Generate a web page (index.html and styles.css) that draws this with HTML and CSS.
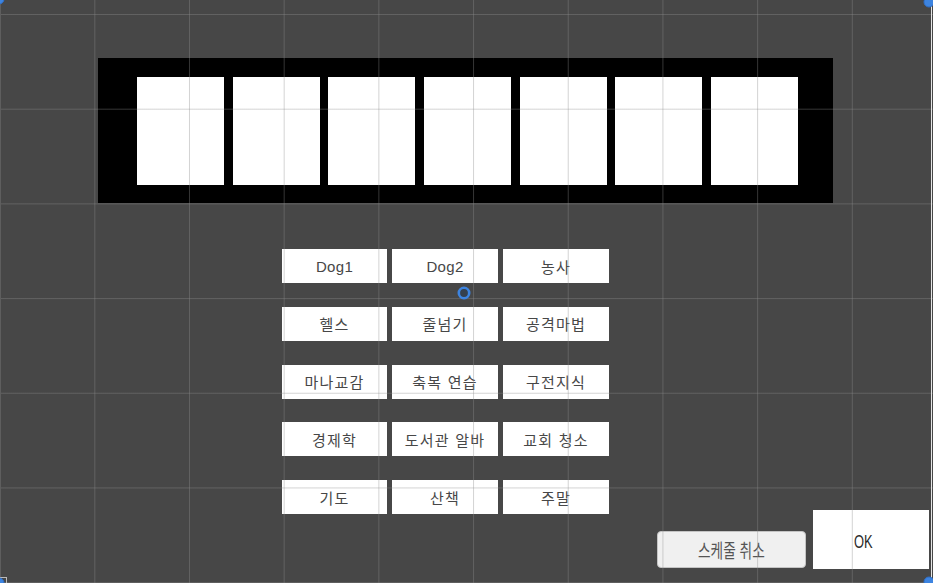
FILE: index.html
```html
<!DOCTYPE html>
<html lang="ko">
<head>
<meta charset="utf-8">
<title>Schedule</title>
<link rel="stylesheet" href="styles.css">
</head>
<body>
<div class="scene">
  <div class="slots">
    <div class="slot"></div>
    <div class="slot"></div>
    <div class="slot"></div>
    <div class="slot"></div>
    <div class="slot"></div>
    <div class="slot"></div>
    <div class="slot"></div>
  </div>
  <div class="lower">
    <div class="choices">
      <div class="choice lat">Dog1</div>
      <div class="choice lat">Dog2</div>
      <div class="choice">농사</div>
      <div class="choice">헬스</div>
      <div class="choice">줄넘기</div>
      <div class="choice">공격마법</div>
      <div class="choice">마나교감</div>
      <div class="choice">축복 연습</div>
      <div class="choice">구전지식</div>
      <div class="choice">경제학</div>
      <div class="choice">도서관 알바</div>
      <div class="choice">교회 청소</div>
      <div class="choice">기도</div>
      <div class="choice">산책</div>
      <div class="choice">주말</div>
    </div>
    <div class="cancel"><span class="cancel-label">스케줄 취소</span></div>
    <div class="ok"><span class="ok-label">OK</span></div>
  </div>
</div>
<div class="grid-overlay"></div>
<div class="edge-right"></div>
<div class="edge-left"></div>
<div class="corner-bl"></div>
<svg class="handle handle-mid" width="16" height="16" viewBox="0 0 16 16"><circle cx="8" cy="8" r="5.2" fill="#34404e" stroke="#3d84e0" stroke-width="2.6"/></svg>
<svg class="handle handle-tl" width="14" height="14" viewBox="0 0 14 14"><circle cx="7" cy="7" r="5" fill="#3d84e0" stroke="#2f6fc8" stroke-width="1"/></svg>
<svg class="handle handle-tr" width="14" height="14" viewBox="0 0 14 14"><circle cx="7" cy="7" r="5" fill="#3d84e0" stroke="#2f6fc8" stroke-width="1"/></svg>
<svg class="handle handle-br" width="14" height="14" viewBox="0 0 14 14"><circle cx="7" cy="7" r="5" fill="#3d84e0" stroke="#2f6fc8" stroke-width="1"/></svg>
<svg class="handle handle-bl" width="14" height="14" viewBox="0 0 14 14"><circle cx="7" cy="7" r="5" fill="#3d84e0" stroke="#2f6fc8" stroke-width="1"/></svg>
</body>
</html>
```
FILE: styles.css
```css
html, body {
  margin: 0;
  padding: 0;
}
body {
  width: 933px;
  height: 583px;
  background: #474747;
  overflow: hidden;
  position: relative;
  font-family: "Liberation Sans", "Noto Sans CJK KR", sans-serif;
}
.scene {
  display: flex;
  flex-direction: column;
  padding-top: 58px;
}
.slots {
  margin-left: 98px;
  width: 735px;
  height: 145px;
  box-sizing: border-box;
  padding: 19px 35px 18px 39px;
  background: #000;
  display: flex;
  justify-content: space-between;
}
.slot {
  width: 87px;
  height: 108px;
  background: #fff;
}
.lower {
  margin-top: 46px;
  display: flex;
  align-items: flex-end;
}
.choices {
  margin-left: 282px;
  margin-bottom: 55px;
  display: grid;
  grid-template-columns: 105px 106px 106px;
  grid-auto-rows: 34px;
  column-gap: 5px;
  row-gap: 23.75px;
}
.choice {
  background: #fff;
  color: #474747;
  font-family: "Noto Sans CJK KR", "Liberation Sans", sans-serif;
  font-size: 15px;
  letter-spacing: 1.2px;
  display: flex;
  align-items: center;
  justify-content: center;
}
.choice.lat {
  font-family: "Liberation Sans", sans-serif;
  font-size: 15px;
  letter-spacing: 0.3px;
}
.cancel {
  margin-left: 48px;
  margin-bottom: 1px;
  width: 149px;
  height: 37px;
  box-sizing: border-box;
  background: #f0f0f0;
  border: 1px solid #c4c4c4;
  border-radius: 4px;
  display: flex;
  align-items: center;
  justify-content: center;
}
.cancel-label {
  display: inline-block;
  font-family: "Noto Sans CJK KR", sans-serif;
  font-size: 19px;
  color: #555;
  transform: scaleX(0.72);
  white-space: nowrap;
}
.ok {
  margin-left: 7px;
  width: 116px;
  height: 59px;
  background: #fff;
  box-sizing: border-box;
  padding-left: 41px;
  display: flex;
  align-items: center;
}
.ok-label {
  display: inline-block;
  font-family: "Liberation Sans", sans-serif;
  font-size: 19px;
  color: #2a2a2a;
  transform: scaleX(0.68);
  transform-origin: left center;
  margin-top: 5px;
}
.grid-overlay {
  position: absolute;
  inset: 0;
  pointer-events: none;
  background-image:
    linear-gradient(to right, rgba(140,140,140,0.38) 1px, transparent 1px),
    linear-gradient(to bottom, rgba(140,140,140,0.38) 1px, transparent 1px);
  background-size: 94.7px 100%, 100% 94.7px;
  background-position: 94.3px 0, 0 14px;
}
.edge-right {
  position: absolute;
  left: 931px;
  top: 0;
  width: 1px;
  height: 583px;
  background: #e6e6e6;
}
.edge-left {
  position: absolute;
  left: 0;
  top: 0;
  width: 1px;
  height: 583px;
  background: #5e5e5e;
}
.corner-bl {
  position: absolute;
  left: 0;
  top: 577px;
  width: 6px;
  height: 6px;
  border-top: 1px solid #bbb;
  border-right: 1px solid #bbb;
}
.handle {
  position: absolute;
}
.handle-mid { left: 456px; top: 285px; }
.handle-tl { left: -8px; top: -8px; }
.handle-tr { left: 922px; top: -5px; }
.handle-br { left: 922px; top: 575px; }
.handle-bl { left: -8px; top: 576px; }
```
